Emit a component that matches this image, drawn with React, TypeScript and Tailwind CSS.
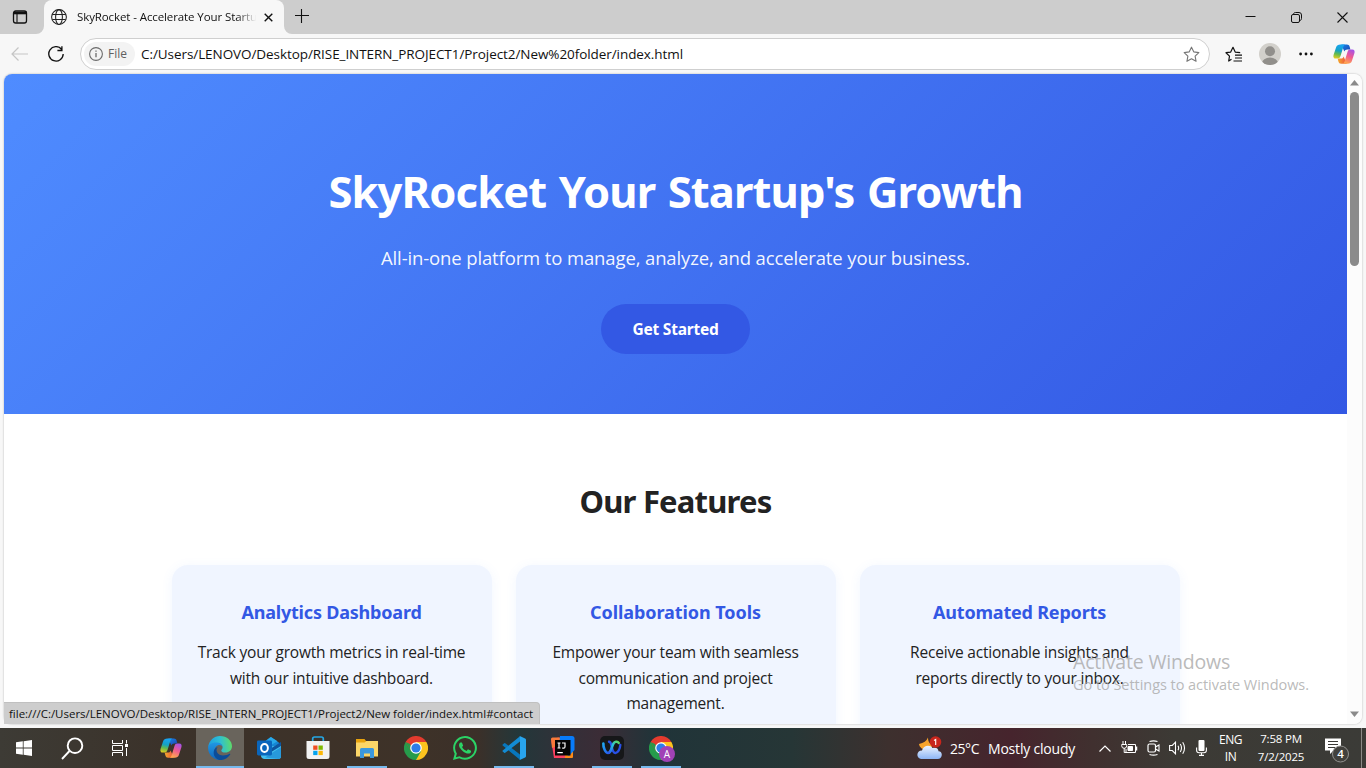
import type { ReactNode } from "react";

function WindowTabs() {
  return (
    <div className="flex h-[34px] shrink-0 bg-[#cdcdcd] text-[#111]">
      <div className="flex w-[44px] items-center rounded-br-[8px] pl-[12px]">
        <svg width="16" height="16" viewBox="0 0 16 16" fill="none" stroke="#111">
          <rect x="1.5" y="2" width="13" height="12" rx="2.2" strokeWidth="1.3" />
          <path d="M1.5 4h13" strokeWidth="2.6" />
          <path d="M5 4.5v9" strokeWidth="1.1" />
        </svg>
      </div>
      <div className="relative flex w-[240px] items-center rounded-t-[8px] bg-[#f7f7f7] pl-[7px]">
        <svg className="absolute -left-[8px] bottom-0" width="8" height="8" viewBox="0 0 8 8">
          <path d="M8 0v8H0A8 8 0 0 0 8 0Z" fill="#f7f7f7" />
        </svg>
        <svg className="absolute -right-[8px] bottom-0" width="8" height="8" viewBox="0 0 8 8">
          <path d="M0 0v8h8A8 8 0 0 1 0 0Z" fill="#f7f7f7" />
        </svg>
        <svg width="16" height="16" viewBox="0 0 16 16" fill="none" stroke="#222" strokeWidth="1.05">
          <circle cx="8" cy="8" r="7.4" />
          <ellipse cx="8" cy="8" rx="3.4" ry="7.4" />
          <path d="M1.3 5.5h13.4M1.3 10.5h13.4" />
        </svg>
        <div className="ml-[10px] w-[180px] overflow-hidden whitespace-nowrap text-[11.5px] leading-[18px] tracking-[-0.1px] [mask-image:linear-gradient(to_right,black_160px,transparent_179px)]">
          SkyRocket - Accelerate Your Startu
        </div>
        <svg className="ml-[7px]" width="9" height="9" viewBox="0 0 9 9" stroke="#111" strokeWidth="1.4">
          <path d="M.7.7l7.6 7.6M8.3.7.7 8.3" />
        </svg>
      </div>
      <svg className="mt-[9px] ml-[11px]" width="14" height="14" viewBox="0 0 14 14" stroke="#111" strokeWidth="1.1">
        <path d="M6.5 0v14M0 6.5h14" />
      </svg>
      <div className="ml-auto flex items-center pr-[18px]">
        <svg width="11" height="11" viewBox="0 0 11 11" stroke="#111"><path d="M.5 4.5h10" /></svg>
        <svg className="ml-[35px]" width="11" height="11" viewBox="0 0 11 11" fill="none" stroke="#111">
          <rect x=".5" y="2.5" width="8" height="8" rx="1.5" />
          <path d="M2.5 2.3C2.6 1.2 3.3.5 4.4.5H8a2.5 2.5 0 0 1 2.500 2.500v3.600c0 1.100-.7 1.800-1.800 1.900" />
        </svg>
        <svg className="ml-[35px]" width="11" height="11" viewBox="0 0 11 11" stroke="#111" strokeWidth="1.1">
          <path d="M.5.5l10 10M10.5.5l-10 10" />
        </svg>
      </div>
    </div>
  );
}

const star = "M8 1.1l2.1 4.4 4.8.7-3.5 3.4.9 4.8L8 12.1l-4.3 2.3.9-4.8L1.1 6.2l4.8-.7z";

function CopilotIcon({ size, id }: { size: number; id: string }) {
  return (
    <svg width={size} height={size} viewBox="0 0 24 24">
      <defs>
        <linearGradient id={`${id}A`} x1=".3" y1="0" x2=".1" y2="1">
          <stop offset="0" stopColor="#18a4f0" /><stop offset=".4" stopColor="#14a2c4" />
          <stop offset=".65" stopColor="#62b94f" /><stop offset="1" stopColor="#f1cf1b" />
        </linearGradient>
        <linearGradient id={`${id}B`} x1=".8" y1="0" x2=".4" y2="1">
          <stop offset="0" stopColor="#a252ec" /><stop offset=".5" stopColor="#ef5a92" /><stop offset="1" stopColor="#ffa64f" />
        </linearGradient>
        <linearGradient id={`${id}C`} x1="0" y1="0" x2="1" y2="1">
          <stop offset="0" stopColor="#1786ec" /><stop offset="1" stopColor="#1d41ad" />
        </linearGradient>
        <linearGradient id={`${id}D`} x1="0" y1="0" x2="1" y2="0">
          <stop offset="0" stopColor="#f4ab29" /><stop offset="1" stopColor="#ee5042" />
        </linearGradient>
      </defs>
      <path d="M9 1.500h6.200c1.600 0 2.400.8 2.800 2.100l1 3.400h-3.300c-1.900 0-2.800.8-3.300 2.400z" fill={`url(#${id}C)`} />
      <path d="M15 22.500H8.800c-1.600 0-2.400-.8-2.800-2.100L5 17h3.300c1.900 0 2.800-.8 3.300-2.400z" fill={`url(#${id}D)`} />
      <path d="M8 1.500h5.600c-1.200.3-1.800 1.100-2.200 2.400L8.200 14.300C7.600 16.200 6.600 17 4.900 17H3C.7 17 0 15.200.6 13L3.400 4.500C4.100 2.400 5.600 1.500 8 1.500z" fill={`url(#${id}A)`} />
      <path d="M16 22.500h-5.600c1.200-.3 1.800-1.100 2.200-2.400l3.200-10.400C16.400 7.800 17.400 7 19.100 7H21c2.300 0 3 1.800 2.400 4l-2.800 8.500c-.7 2.100-2.200 3-4.600 3z" fill={`url(#${id}B)`} />
    </svg>
  );
}

function AddressBar() {
  return (
    <div className="flex h-[40px] shrink-0 items-center bg-[#f7f7f7] pl-[11px]">
      <svg width="17" height="14" viewBox="0 0 17 14" fill="none" stroke="#c5c5c5" strokeWidth="1.2">
        <path d="M7.500.5L1 7l6.500 6.500M1 7h16" />
      </svg>
      <svg className="ml-[20px]" width="16" height="16" viewBox="0 0 16 16" fill="none" stroke="#111" strokeWidth="1.35">
        <path d="M13.500 3.200A7.200 7.200 0 1 0 15.200 8M13.900.2v4.300H9.400" />
      </svg>
      <div className="ml-[16px] flex h-[32px] w-[1130px] shrink-0 items-center rounded-full border border-[#cfcfcf] bg-white">
        <div className="ml-[3px] flex h-[24px] w-[51px] items-center rounded-full bg-[#f3f3f3] pl-[5px]">
          <svg width="14" height="14" viewBox="0 0 14 14" fill="none" stroke="#6b6b6b" strokeWidth="1.1">
            <circle cx="7" cy="7" r="6.4" />
            <path d="M7 6v4.300M7 3.600v1.200" strokeWidth="1.3" />
          </svg>
          <span className="ml-[5px] text-[12px] leading-[18px] text-[#606060]">File</span>
        </div>
        <span className="ml-[6px] text-[13.5px] leading-[20px] tracking-[-0.07px] whitespace-nowrap text-[#111]">
          C:/Users/LENOVO/Desktop/RISE_INTERN_PROJECT1/Project2/New%20folder/index.html
        </span>
        <svg className="mr-[9px] ml-auto" width="17" height="17" viewBox="0 0 16 16" fill="none" stroke="#767676" strokeWidth="1.05" strokeLinejoin="round">
          <path d={star} />
        </svg>
      </div>
      <svg className="ml-[15px] shrink-0" width="18" height="17" viewBox="0 0 18 17" fill="none" stroke="#111" strokeWidth="1.2" strokeLinejoin="round">
        <path d="M6.500 13.200L3.700 15l.8-4.900L1 6.700l4.700-.6L8 1.300l2.200 4.800 5 .6M10 9.100h7M10 12h7M8.500 15H17" />
      </svg>
      <svg className="ml-[16px] shrink-0" width="22" height="22" viewBox="0 0 22 22">
        <defs><clipPath id="avatar"><circle cx="11" cy="11" r="11" /></clipPath></defs>
        <g clipPath="url(#avatar)">
          <rect width="22" height="22" fill="#d2d0cb" />
          <circle cx="11" cy="8.200" r="5" fill="#918f8b" />
          <ellipse cx="11" cy="20" rx="8" ry="5.400" fill="#918f8b" />
        </g>
      </svg>
      <svg className="ml-[18px] shrink-0" width="14" height="4" viewBox="0 0 14 4" fill="#111">
        <circle cx="1.600" cy="2" r="1.400" /><circle cx="7" cy="2" r="1.400" /><circle cx="12.400" cy="2" r="1.400" />
      </svg>
      <div className="ml-[20px] shrink-0"><CopilotIcon size={22} id="cpBar" /></div>
    </div>
  );
}

function FeatureCard({ title, heading, children }: { title: string; heading: string; children: ReactNode }) {
  return (
    <div className="h-[220px] w-[320px] shrink-0 rounded-[16px] bg-[#f0f5ff] px-[20px] pt-[32px] text-center shadow-[0_2px_12px_rgba(79,140,255,0.08)]">
      <h3 className={`font-['Noto_Sans',sans-serif] text-[18px] leading-[30px] font-bold text-[#3358e4] ${heading}`}>{title}</h3>
      <div className="mt-[13px] text-[15.5px] leading-[25.6px] tracking-[-0.2px] whitespace-nowrap text-[#222]">{children}</div>
    </div>
  );
}

function LandingPage() {
  return (
    <div className="flex w-[1343px] flex-col">
      <header className="flex h-[340px] shrink-0 flex-col items-center bg-[linear-gradient(135deg,#4f8cff_0%,#3358e4_100%)] pt-[82px] text-white">
        <h1 className="font-['Noto_Sans',sans-serif] text-[43.5px] leading-[71px] font-bold tracking-[-0.87px] [word-spacing:2px] whitespace-nowrap">
          SkyRocket Your Startup's Growth
        </h1>
        <p className="mt-[15px] text-[18.5px] leading-[31px] tracking-[-0.127px] whitespace-nowrap text-white/95">
          All-in-one platform to manage, analyze, and accelerate your business.
        </p>
        <div className="mt-[31px] flex h-[50px] w-[149px] items-center justify-center rounded-full bg-[#3358e4] pt-[2px] font-['Noto_Sans',sans-serif] text-[15.5px] font-bold tracking-[-0.226px]">
          Get Started
        </div>
      </header>
      <main className="flex flex-col items-center pt-[62px]">
        <h2 className="font-['Noto_Sans',sans-serif] text-[31px] leading-[51px] font-bold tracking-[-0.8px] text-[#222]">Our Features</h2>
        <div className="mt-[38px] flex gap-[24px]">
          <FeatureCard title="Analytics Dashboard" heading="tracking-[-0.2px]">
            Track your growth metrics in real-time<br />with our intuitive dashboard.
          </FeatureCard>
          <FeatureCard title="Collaboration Tools" heading="tracking-[-0.066px]">
            Empower your team with seamless<br />communication and project<br />management.
          </FeatureCard>
          <FeatureCard title="Automated Reports" heading="tracking-[-0.19px]">
            Receive actionable insights and<br />reports directly to your inbox.
          </FeatureCard>
        </div>
      </main>
    </div>
  );
}

function Viewport() {
  return (
    <div className="h-[654px] shrink-0 bg-[#f7f7f7] pr-[4px] pl-[4px]">
      <div className="flex h-[650px] overflow-hidden rounded-[8px] bg-white shadow-[0_0_2px_rgba(0,0,0,0.3)]">
        <LandingPage />
        <div className="flex w-[15px] shrink-0 flex-col items-center bg-[#fcfcfc]">
          <svg className="mt-[6px]" width="9" height="6" viewBox="0 0 9 6"><path d="M0 5.500L4.500 0 9 5.500z" fill="#8a8a8a" /></svg>
          <div className="mt-[6px] h-[174px] w-[9px] rounded-full bg-[#8b8b8b]" />
          <svg className="mt-auto mb-[7px]" width="9" height="6" viewBox="0 0 9 6"><path d="M0 .5L4.500 6 9 .5z" fill="#8a8a8a" /></svg>
        </div>
      </div>
    </div>
  );
}

function EdgeIcon() {
  return (
    <svg width="24" height="24" viewBox="0 0 24 24">
      <defs>
        <linearGradient id="edA" x1="0" y1=".4" x2="1" y2=".3">
          <stop offset="0" stopColor="#1d9fe0" /><stop offset=".5" stopColor="#2dbfd5" /><stop offset="1" stopColor="#61dc63" />
        </linearGradient>
        <linearGradient id="edB" x1="0" y1="0" x2="0" y2="1">
          <stop offset="0" stopColor="#1f97e4" /><stop offset="1" stopColor="#1266bc" />
        </linearGradient>
      </defs>
      <path d="M.2 11C1 4.500 6 0 12 0c7 0 12 4.900 12 10.200 0 3.800-3 6.300-6.500 6.300-2.900 0-4.200-1.200-4.200-2.100 0-.7 1.300-1.300 1.300-3.200 0-2.200-2.300-4.300-5.600-4.300C5.500 6.900 2 8 .2 11z" fill="url(#edA)" />
      <path d="M.1 12C.1 9 3.400 6.600 8 6.600c4 0 6.600 2.100 6.600 4.600 0-1.400-1.600-2.200-3-2.200-4 0-6.300 4.500-4.300 8.600 1.400 3 4.200 5.300 7.300 6.100A12 12 0 0 1 .1 12z" fill="url(#edB)" />
      <path d="M9.600 11.300c-2.700 3 0 8.200 5.300 8.200 2.800 0 4.900-.7 6.600-1.700.5-.3 1 .2.7.7C19.400 22.700 15 24.400 11.500 24 6.500 22.500 4.900 18 6 14.500c.6-1.800 1.900-3 3.600-3.200z" fill="#0c4c98" />
    </svg>
  );
}

function OutlookIcon() {
  return (
    <svg width="25" height="24" viewBox="0 0 25 24">
      <path d="M4 8.500L13.500 1 24 8v3L13 17 4 12z" fill="#1687d4" />
      <path d="M8 5.500L14 1l6.500 4.300L9 12z" fill="#28a9ea" />
      <path d="M4 12l20-3v11.500c0 1.400-1 2.500-2.500 2.500h-14C5.500 23 4 21.500 4 20z" fill="#43bfef" />
      <path d="M24 9v2L8 21.500 22 22.900c1.200-.2 2-1.200 2-2.400z" fill="#2799dc" />
      <path d="M13 13L24 6v4l-9 5.500z" fill="#0d559f" />
      <rect y="4.500" width="15" height="15" rx="1.400" fill="#0a66bc" />
      <ellipse cx="7.500" cy="12" rx="3.400" ry="3.900" fill="none" stroke="white" strokeWidth="2" />
    </svg>
  );
}

function StoreIcon() {
  return (
    <svg width="24" height="24" viewBox="0 0 24 24">
      <path d="M6.700 6V2.800Q6.700 1 8.500 1h7Q17.300 1 17.300 2.800V6" fill="none" stroke="#25a8e5" strokeWidth="1.700" />
      <path d="M.5 5h23v15.500a2.500 2.500 0 0 1-2.500 2.500H3A2.500 2.500 0 0 1 .5 20.500z" fill="#f2f2f2" />
      <path d="M7.200 9.500h4.300v4.300H7.200z" fill="#f04e23" /><path d="M12.500 9.500h4.300v4.300h-4.300z" fill="#7fb900" />
      <path d="M7.200 14.800h4.300v4.300H7.200z" fill="#05a3ee" /><path d="M12.500 14.800h4.300v4.300h-4.300z" fill="#fdb807" />
    </svg>
  );
}

function FolderIcon() {
  return (
    <svg width="22" height="20" viewBox="0 0 22 20">
      <path d="M0 1h8.500l1.500 2H22v15H0z" fill="#e8a30e" />
      <path d="M0 4.500h8.500L10.500 3H22v15.500H0z" fill="#fbd668" />
      <path d="M4 20v-8.500q0-1.500 1.500-1.500h11q1.500 0 1.500 1.500V20h-4v-4.500H8V20z" fill="#3b98dd" />
    </svg>
  );
}

function ChromeIcon() {
  return (
    <svg width="24" height="24" viewBox="0 0 24 24">
      <path d="M12 12L1.600 6A12 12 0 0 1 22.400 6z" fill="#e33b2e" />
      <path d="M12 12l10.400-6A12 12 0 0 1 12 24z" fill="#fcc31e" />
      <path d="M12 12v12A12 12 0 0 1 1.600 6z" fill="#269b4b" />
      <path d="M12 6h10.400l-5.200 9L12 12z" fill="#fcc31e" />
      <path d="M17.200 15L12 24 9 17z" fill="#269b4b" />
      <path d="M1.600 6l5.200 9L12 6z" fill="#e33b2e" />
      <path d="M1.600 6l5.200 9 2-1L6 8z" fill="#269b4b" />
      <circle cx="12" cy="12" r="5.800" fill="white" /><circle cx="12" cy="12" r="4.600" fill="#2d7de9" />
    </svg>
  );
}

function WhatsAppIcon() {
  return (
    <svg width="24" height="24" viewBox="0 0 24 24" fill="#2bd366">
      <path d="M17.470 14.380c-.3-.15-1.760-.87-2.030-.97-.27-.1-.47-.15-.67.15-.2.300-.77.970-.94 1.160-.17.200-.35.220-.64.080-.3-.15-1.260-.46-2.390-1.480-.88-.79-1.480-1.760-1.650-2.060-.17-.3-.02-.46.130-.61.130-.13.300-.35.450-.52.150-.17.200-.3.300-.5.100-.2.050-.37-.03-.52-.07-.15-.67-1.610-.92-2.210-.24-.58-.49-.5-.67-.51h-.57c-.2 0-.52.070-.79.370-.27.300-1.040 1.020-1.040 2.480s1.070 2.880 1.210 3.070c.15.200 2.100 3.200 5.080 4.490.71.310 1.260.49 1.690.63.710.23 1.360.2 1.870.12.570-.09 1.760-.72 2.010-1.410.25-.69.250-1.290.17-1.410-.07-.12-.27-.2-.57-.35z" />
      <path d="M12 0A11.900 11.900 0 0 0 1.700 17.800L0 24l6.300-1.650A11.900 11.900 0 1 0 12 0zm0 21.800a9.900 9.900 0 0 1-5.030-1.380l-.36-.21-3.740.98 1-3.650-.24-.37A9.880 9.880 0 1 1 12 21.800z" />
    </svg>
  );
}

function VSCodeIcon() {
  return (
    <svg width="24" height="24" viewBox="0 0 24 24">
      <path d="M.7 8.500l1.500-1.300q.5-.4 1 0L18 18.500v5.300L.7 9.500q-.6-.5 0-1z" fill="#0877bd" />
      <path d="M.7 15.500l1.500 1.300q.5.400 1 0L18 5.500V.2L.7 14.500q-.6.500 0 1z" fill="#138bd2" />
      <path d="M17.300.3q.4-.3 1-.1l4.800 2.300q.9.400.9 1.300v16.400q0 .9-.9 1.300l-4.800 2.300q-.6.200-1-.1.700.2.700-.7V1q0-.9-.7-.7z" fill="#28a5ee" />
    </svg>
  );
}

function IntelliJIcon() {
  return (
    <svg width="24" height="24" viewBox="0 0 24 24">
      <path d="M0 3l8-1.500L17 22H3z" fill="#fb4060" />
      <path d="M0 3q0-1.500 1.500-1.500H9V9L1 12z" fill="#fa7a3a" />
      <path d="M14 14l8-2v9q0 1-1 1h-7z" fill="#fd8b17" />
      <path d="M9 0h12q2.500 0 2.500 2.500V14L18 20 8 14z" fill="#087cfa" />
      <path d="M4 4h15.500v15.500H4z" fill="#050505" />
      <path d="M6.500 7h3M8 7v5M6.500 12h3M11 7h3v3.700q0 1.500-1.400 1.500h-1.400M6.300 16.600h5.500" fill="none" stroke="white" strokeWidth="1.200" />
    </svg>
  );
}

function WebexIcon() {
  return (
    <svg width="24" height="24" viewBox="0 0 24 24" fill="none" strokeLinecap="round">
      <defs>
        <linearGradient id="wxA" x1="0" y1="0" x2="1" y2="1"><stop offset="0" stopColor="#20a8f0" /><stop offset="1" stopColor="#2451f2" /></linearGradient>
        <linearGradient id="wxB" x1="0" y1="1" x2="1" y2="0"><stop offset="0" stopColor="#2c58e8" /><stop offset=".5" stopColor="#25bce5" /><stop offset="1" stopColor="#60d95c" /></linearGradient>
      </defs>
      <rect width="24" height="24" rx="5" fill="#161719" />
      <path d="M20.300 9c-.3 4.500-2.600 8-4.800 8-2.300 0-3.400-3.800-4-7.300-.5-2.600-1.300-4-2.500-4" stroke="#2850e5" strokeWidth="2.400" />
      <path d="M3.400 7.500C3 11.500 5.500 17 8.200 17c1.800 0 2.800-2.200 3.600-5" stroke="url(#wxA)" strokeWidth="2.600" />
      <path d="M8.800 16.800c2.400-1.200 2.900-6.300 4.700-9.300 1.200-1.900 4-2.500 5.200-.6" stroke="url(#wxB)" strokeWidth="2.500" />
    </svg>
  );
}

function TaskButton({ children, state = "" }: { children: ReactNode; state?: "active" | "open" | "" }) {
  return (
    <div className={`relative flex h-[40px] w-[48px] shrink-0 items-center justify-center ${state === "active" ? "bg-[#69645c]" : ""}`}>
      {children}
      {state !== "" && <div className={`absolute bottom-0 h-[2px] bg-[#76b9ed] ${state === "active" ? "w-[48px]" : "w-[40px]"}`} />}
    </div>
  );
}

function Tray() {
  return (
    <div className="ml-auto flex h-[40px] items-center text-white">
      <svg width="26" height="24" viewBox="0 0 26 24">
        <defs><linearGradient id="cloud" x1="0" y1="0" x2="0" y2="1"><stop offset="0" stopColor="#edf4ff" /><stop offset="1" stopColor="#8db5f5" /></linearGradient></defs>
        <path d="M11 1.500Q9 6.500 2 8C3 15 14 16 16 8 13 9 11 6 11 1.500z" fill="#f7a42b" />
        <path d="M5.500 23C-1.500 23-1 14.500 5 14.500 6 9 13.500 8.500 15.500 12c4-1 6 .8 6 3.300 4.800 0 4.300 7.700-1 7.700z" fill="url(#cloud)" />
        <circle cx="18.500" cy="6" r="5.800" fill="#c9261d" />
        <path d="M17 4.500l1.700-1.100V9" fill="none" stroke="white" strokeWidth="1.100" />
      </svg>
      <span className="ml-[7px] w-[38px] text-[14px] tracking-[-0.45px]">25°C</span>
      <span className="w-[87px] text-[14px] tracking-[-0.2px] whitespace-nowrap">Mostly cloudy</span>
      <svg className="ml-[24px]" width="12" height="7" viewBox="0 0 12 7" fill="none" stroke="white" strokeWidth="1.200"><path d="M.5 6.500L6 1l5.500 5.500" /></svg>
      <svg className="ml-[10px]" width="17" height="14" viewBox="0 0 17 14" fill="none" stroke="white">
        <path d="M2 0v3M4.500 0v3M.7 3.500h5v1.300a2.500 2.500 0 0 1-5 0zM3.200 7v4.500H5M7 3.500h7.500v8H5V8" />
        <path d="M7 5.500h4.500v4H7z" fill="white" /><path d="M15.500 5.500v4" strokeWidth="1.500" />
      </svg>
      <svg className="ml-[9px]" width="13" height="16" viewBox="0 0 13 16" fill="none" stroke="white">
        <path d="M2.500 1.500q4-1.300 8 0M2.500 14.500q4 1.300 8 0" strokeWidth="1.100" />
        <rect x="1" y="4" width="7.500" height="8" rx="1.500" strokeWidth="1.200" /><path d="M8.500 7L12 5v6L8.500 9" strokeWidth="1.100" />
      </svg>
      <svg className="ml-[9px]" width="17" height="14" viewBox="0 0 17 14" fill="none" stroke="white" strokeWidth="1.100">
        <path d="M.6 4.500h2.700L6.500 1.200v11.600L3.300 9.500H.6zM9 4.800q1.300 2.200 0 4.400M11.300 3q2.400 4 0 8M13.700 1.200q3.700 5.800 0 11.600" />
      </svg>
      <svg className="ml-[10px]" width="11" height="16" viewBox="0 0 11 16">
        <rect x="2.500" y="0" width="6" height="11" rx="1" fill="white" />
        <path d="M.6 7.500v2.700q0 2.500 2.500 2.500h4.800q2.500 0 2.500-2.500V7.500M5.500 13v2.500M3 15.400h5" fill="none" stroke="white" strokeWidth="1.100" />
      </svg>
      <div className="ml-[9px] flex w-[29px] flex-col items-center text-[12px] leading-[17px] tracking-[-0.47px]"><span>ENG</span><span>IN</span></div>
      <div className="ml-[8px] flex w-[56px] flex-col items-center text-[11.5px] leading-[18px] tracking-[-0.2px] whitespace-nowrap"><span>7:58 PM</span><span>7/2/2025</span></div>
      <svg className="mt-[4px] ml-[16px]" width="25" height="25" viewBox="0 0 25 25">
        <path d="M0 .5h16v12H8.500L5 16v-3.500H0z" fill="white" />
        <path d="M3 3.500h10M3 6.500h10M3 9.500h7" stroke="#3b3a36" strokeWidth="1.100" />
        <circle cx="15.500" cy="16" r="8" fill="#42413d" stroke="#92918f" />
        <text x="15.500" y="20" textAnchor="middle" fontSize="11.500" fontWeight="600" fill="white">4</text>
      </svg>
      <div className="ml-[11px] h-[40px] w-[5px] border-l border-[#8b8a87]" />
    </div>
  );
}

function Taskbar() {
  return (
    <div className="flex h-[40px] shrink-0 items-center bg-[linear-gradient(90deg,#3d3b35_0%,#3b322a_12%,#3e3228_30%,#3b3029_35%,#23373a_38%,#352f38_42%,#3b2c36_44%,#203439_48%,#263636_58%,#3d302e_65%,#46242d_74%,#40302f_80%,#3c3a35_86%,#3b3b37_100%)]">
      <TaskButton>
        <svg width="16" height="16" viewBox="0 0 16 16" fill="white"><path d="M0 2.300l6.800-1v6.300H0zM7.600 1.200L16 0v7.600H7.600zM0 8.400h6.800v6.300L0 13.700zM7.600 8.400H16V16l-8.400-1.200z" /></svg>
      </TaskButton>
      <TaskButton>
        <svg width="23" height="23" viewBox="0 0 23 23" fill="none" stroke="white" strokeWidth="1.900"><circle cx="14" cy="8.700" r="7.300" /><path d="M8.500 14L1 22" /></svg>
      </TaskButton>
      <TaskButton>
        <svg width="17" height="16" viewBox="0 0 17 16" fill="none" stroke="white">
          <path d="M.5 0v3.500h10V0M.5 16v-3.500h10V16M.5 5.500h10v5H.5zM14.500 0v3.500M14.500 8v8" /><path d="M13 4h3v3h-3z" fill="white" stroke="none" />
        </svg>
      </TaskButton>
      <div className="ml-[3px] flex gap-px">
        <TaskButton><CopilotIcon size={22} id="cpTask" /></TaskButton>
        <TaskButton state="active"><EdgeIcon /></TaskButton>
        <TaskButton><OutlookIcon /></TaskButton>
        <TaskButton><StoreIcon /></TaskButton>
        <TaskButton state="open"><FolderIcon /></TaskButton>
        <TaskButton><ChromeIcon /></TaskButton>
        <TaskButton><WhatsAppIcon /></TaskButton>
        <TaskButton state="open"><VSCodeIcon /></TaskButton>
        <TaskButton><IntelliJIcon /></TaskButton>
        <TaskButton state="open"><WebexIcon /></TaskButton>
        <TaskButton state="open">
          <ChromeIcon />
          <div className="absolute top-[18px] left-[22px] flex h-[16px] w-[16px] items-center justify-center rounded-full bg-[#a142b6] text-[10px] leading-none text-white">A</div>
        </TaskButton>
      </div>
      <Tray />
    </div>
  );
}

export default function App() {
  return (
    <div className="relative flex h-[768px] w-[1366px] flex-col overflow-hidden bg-[#f7f7f7] font-['Open_Sans','Noto_Sans',sans-serif]">
      <WindowTabs />
      <AddressBar />
      <Viewport />
      <Taskbar />
      <div className="absolute top-[702px] left-[4px] h-[22px] w-[536px] rounded-tr-[4px] border-t border-r border-[#c0c0c0] bg-[#cdcdcd] pl-[5px] text-[11.5px] leading-[22px] tracking-[-0.016px] whitespace-nowrap text-[#111]">
        file:///C:/Users/LENOVO/Desktop/RISE_INTERN_PROJECT1/Project2/New folder/index.html#contact
      </div>
      <div className="absolute top-[648px] left-[1073px] whitespace-nowrap text-[#a8a8a8]/80">
        <div className="text-[19.5px] leading-[28px] tracking-[-0.19px]">Activate Windows</div>
        <div className="text-[14.5px] leading-[18px] tracking-[-0.045px]">Go to Settings to activate Windows.</div>
      </div>
    </div>
  );
}
